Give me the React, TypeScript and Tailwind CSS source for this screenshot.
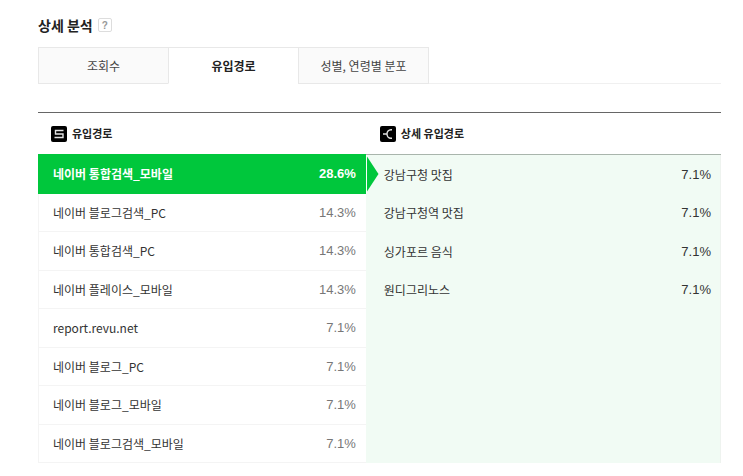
import { useState } from 'react';

const tabs = ["조회수", "유입경로", "성별, 연령별 분포"];

const sources = [
  { name: "네이버 통합검색_모바일", rate: "28.6%" },
  { name: "네이버 블로그검색_PC", rate: "14.3%" },
  { name: "네이버 통합검색_PC", rate: "14.3%" },
  { name: "네이버 플레이스_모바일", rate: "14.3%" },
  { name: "report.revu.net", rate: "7.1%" },
  { name: "네이버 블로그_PC", rate: "7.1%" },
  { name: "네이버 블로그_모바일", rate: "7.1%" },
  { name: "네이버 블로그검색_모바일", rate: "7.1%" },
];

const details = [
  { name: "강남구청 맛집", rate: "7.1%" },
  { name: "강남구청역 맛집", rate: "7.1%" },
  { name: "싱가포르 음식", rate: "7.1%" },
  { name: "원디그리노스", rate: "7.1%" },
];

function SourceIcon() {
  return (
    <svg width="16" height="16" viewBox="0 0 16 16" fill="none" aria-hidden="true">
      <rect width="16" height="16" rx="2" fill="#000" />
      <path d="M12.5 4.5H4.5V8H12V11.5H3.5" stroke="#e4e4e4" strokeWidth="1.4" />
    </svg>
  );
}

function DetailIcon() {
  return (
    <svg width="16" height="16" viewBox="0 0 16 16" fill="none" aria-hidden="true">
      <rect width="16" height="16" rx="2" fill="#000" />
      <path d="M3 8H7M12 3.8H11C8.5 3.8 7 5.8 7 8S8.5 12.2 11 12.2H12" stroke="#e4e4e4" strokeWidth="1.4" />
    </svg>
  );
}

export default function App() {
  const [activeTab, setActiveTab] = useState(1);
  const [selected, setSelected] = useState(0);

  return (
    <main className="bg-white pt-4 pb-3 pl-[38px] pr-[22px] font-['Liberation_Sans','Noto_Sans_CJK_KR',sans-serif] text-[#333]">
      <div className="flex h-[18px] items-center gap-[5px]">
        <h1 className="font-['Noto_Sans_CJK_KR',sans-serif] text-sm font-bold text-[#222]">상세 분석</h1>
        <button
          aria-label="도움말"
          className="flex size-[14px] items-center justify-center rounded-xs border border-[#ddd] text-[10px] font-bold text-[#999]"
        >
          ?
        </button>
      </div>

      {/* Tabs */}
      <div className="mt-[13px] flex border-b border-[#f0f0f0]">
        {tabs.map((tab, i) => (
          <button
            key={tab}
            onClick={() => setActiveTab(i)}
            className={`-mb-px -mr-px h-[37px] w-[131px] border font-['Noto_Sans_CJK_KR',sans-serif] text-xs ${
              activeTab === i
                ? 'border-[#e8e8e8] border-b-white bg-white font-bold text-[#222]'
                : 'border-[#e8e8e8] bg-[#fafafa] text-[#444]'
            }`}
          >
            {tab}
          </button>
        ))}
      </div>

      {/* Referrer table */}
      <table className="mt-7 w-full table-fixed border-separate border-spacing-0 border-t border-[#666] text-[13px]">
        <colgroup>
          <col className="w-[36%]" />
          <col className="w-[12%]" />
          <col className="w-[40%]" />
          <col className="w-[12%]" />
        </colgroup>
        <thead>
          <tr className="h-[42px] font-['Noto_Sans_CJK_KR',sans-serif] text-[11px] text-[#222]">
            <th colSpan={2} className="border-b border-[#00c73c] pl-[13px] text-left font-bold">
              <span className="flex items-center gap-[5px]">
                <SourceIcon />
                유입경로
              </span>
            </th>
            <th colSpan={2} className="border-b border-[#a9b5ac] pl-[14px] text-left font-bold">
              <span className="flex items-center gap-[5px]">
                <DetailIcon />
                상세 유입경로
              </span>
            </th>
          </tr>
        </thead>
        <tbody>
          {sources.map((source, i) => {
            const active = selected === i;
            const detail = details[i];
            return (
              <tr key={source.name} className="odd:h-[39px] even:h-[38px]">
                <td
                  className={`border-b border-l pl-[14px] ${
                    active ? 'border-[#00c73c] bg-[#00c73c] font-bold text-white' : 'border-[#f4f4f4]'
                  }`}
                >
                  <button
                    onClick={() => setSelected(i)}
                    className="block w-full text-left font-['Noto_Sans_CJK_KR',sans-serif] text-xs"
                  >
                    {source.name}
                  </button>
                </td>
                <td
                  className={`relative border-b pr-[10px] text-right ${
                    active ? 'border-[#00c73c] bg-[#00c73c] font-bold text-white' : 'border-[#f4f4f4] text-[#777]'
                  }`}
                >
                  {source.rate}
                  {active && (
                    <svg
                      className="absolute top-0 left-full h-full w-[13px]"
                      viewBox="0 0 13 39"
                      preserveAspectRatio="none"
                      aria-hidden="true"
                    >
                      <path d="M0 0L12.5 19.5L0 39Z" fill="#00c73c" />
                      <path d="M0.5 0V39" stroke="#fff" />
                    </svg>
                  )}
                </td>
                <td className="bg-[#f1fbf4] pl-[18px] font-['Noto_Sans_CJK_KR',sans-serif] text-xs">{detail?.name}</td>
                <td className="border-r border-[#eef3ef] bg-[#f1fbf4] pr-[9px] text-right">{detail?.rate}</td>
              </tr>
            );
          })}
        </tbody>
      </table>
    </main>
  );
}
